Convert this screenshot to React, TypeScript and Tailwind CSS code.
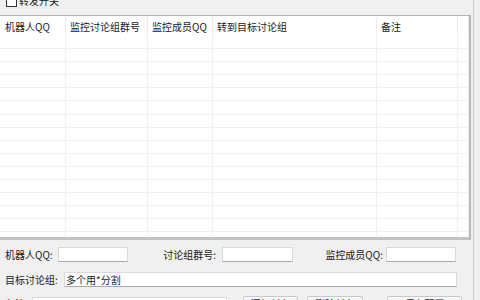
import React from 'react';

const columns = ['机器人QQ', '监控讨论组群号', '监控成员QQ', '转到目标讨论组', '备注', ''];
const rows = Array.from({ length: 16 }, (_, i) => i);

function TextBox({ width, value }: { width: string; value?: string }) {
  return (
    <div
      className={`${width} shrink-0 h-[15px] bg-white border border-[#d9d9d9] border-b-[#a9a9a9] flex items-center pl-[1px] text-[10px] leading-[12px] text-[#1a1a1a]`}
    >
      {value}
    </div>
  );
}

function Button({ width, label }: { width: string; label: string }) {
  return (
    <div
      className={`${width} h-[18px] bg-[#f7f7f7] border border-[#c9c9c9] rounded-[2px] flex justify-center pt-[1px] text-[10px] leading-[12px] text-[#1a1a1a]`}
    >
      {label}
    </div>
  );
}

export default function App() {
  return (
    <div
      className="w-[480px] h-[300px] overflow-hidden bg-[#f0f0f0] flex text-[#1a1a1a]"
      style={{ fontFamily: '"Noto Sans CJK SC", "Noto Sans", sans-serif' }}
    >
      <div className="w-[473px] shrink-0 flex flex-col">
        {/* Checkbox strip, cut off at the top */}
        <div className="h-[15px] shrink-0 flex">
          <div className="flex items-center h-[12px] -mt-[5px] pl-[6px] gap-[2px]">
            <div className="w-[11px] h-[11px] border border-[#333333] bg-white" />
            <span className="text-[10px] leading-[12px]">转发开关</span>
          </div>
        </div>

        {/* Data grid */}
        <div className="w-[471px] h-[225px] shrink-0 bg-white border-t border-t-[#b4b4b4] border-r-2 border-r-[#b8b8b8] border-b-[3px] border-b-[#c2c2c2] overflow-hidden">
          <div className="grid grid-cols-[66px_82px_65px_164px_81px_1fr] h-[20px]">
            {columns.map((c, i) => (
              <div
                key={i}
                className={`flex items-center pt-[2px] text-[10px] leading-[12px] border-r border-r-[#ececec] ${i === 0 ? 'pl-[5px]' : 'pl-[4px]'}`}
              >
                {c}
              </div>
            ))}
          </div>
          {rows.map((r) => (
            <div
              key={r}
              className="grid grid-cols-[66px_82px_65px_164px_81px_1fr] h-[13.1px] border-b border-b-[#f0f0f0]"
            >
              {columns.map((_, i) => (
                <div key={i} className="border-r border-r-[#f0f0f0]" />
              ))}
            </div>
          ))}
        </div>

        {/* Form fields */}
        <div className="flex flex-col shrink-0 pt-[7px] gap-[10px] text-[10px] leading-[12px]">
          <div className="flex items-center">
            <div className="w-[58px] shrink-0 pl-[5px]">机器人QQ:</div>
            <TextBox width="w-[70px]" />
            <div className="w-[94px] shrink-0 text-right pr-[6px]">讨论组群号:</div>
            <TextBox width="w-[71px]" />
            <div className="w-[93px] shrink-0 text-right pr-[3px]">监控成员QQ:</div>
            <TextBox width="w-[70px]" />
          </div>
          <div className="flex items-center">
            <div className="w-[64px] shrink-0 pl-[5px]">目标讨论组:</div>
            <TextBox width="w-[393px]" value="多个用*分割" />
          </div>
          <div className="flex items-start">
            <div className="w-[32px] shrink-0 pl-[5px] pt-[1px]">备注:</div>
            <TextBox width="w-[195px]" />
            <div className="ml-[16px] -mt-[1px]">
              <Button width="w-[55px]" label="添加任务" />
            </div>
            <div className="ml-[9px] -mt-[1px]">
              <Button width="w-[56px]" label="删除任务" />
            </div>
            <div className="ml-[24px] -mt-[1px]">
              <Button width="w-[75px]" label="保存配置" />
            </div>
          </div>
        </div>
      </div>
      <div className="w-[1px] h-full bg-[#cdcdcd]" />
      <div className="flex-1" />
    </div>
  );
}
